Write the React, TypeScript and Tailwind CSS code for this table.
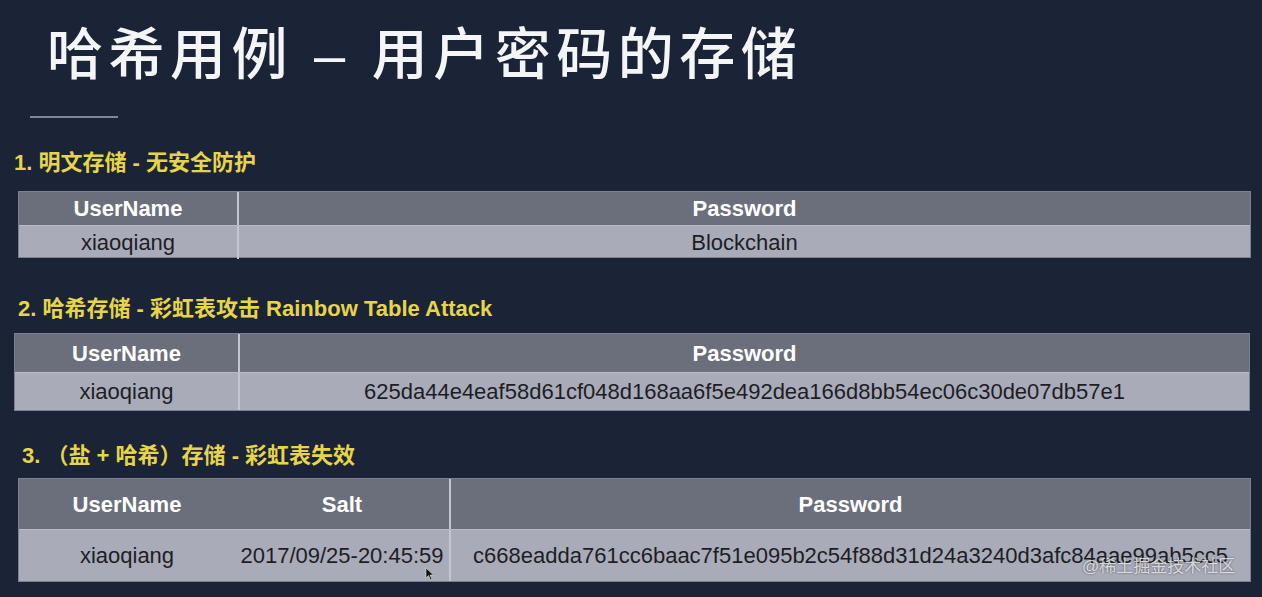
import React from 'react';

const font = '"Liberation Sans", "Noto Sans CJK SC", sans-serif';

const hash2 = '625da44e4eaf58d61cf048d168aa6f5e492dea166d8bb54ec06c30de07db57e1';
const hash3 = 'c668eadda761cc6baac7f51e095b2c54f88d31d24a3240d3afc84aae99ab5cc5';

function Label({ children, className }: { children: React.ReactNode; className: string }) {
  return (
    <div className={`text-[22px] font-bold leading-none text-[#e6d549] ${className}`}>
      {children}
    </div>
  );
}

export default function App() {
  return (
    <div
      className="relative w-[1262px] h-[597px] overflow-hidden bg-[#1b2337]"
      style={{ fontFamily: font }}
    >
      {/* Title */}
      <h1 className="ml-[47px] pt-[27px] text-[56px] leading-none font-medium tracking-[5.5px] text-[#f4f5f7]">
        哈希用例 – 用户密码的存储
      </h1>
      <div className="ml-[30px] mt-[33px] w-[88px] h-[2px] bg-[#7d869a]" />

      {/* 1 */}
      <Label className="ml-[14px] mt-[34px]">1. 明文存储 - 无安全防护</Label>
      <div className="ml-[18px] mt-[17px] w-[1233px] border border-[#7c8090]">
        <div className="grid grid-cols-[220px_1fr] h-[33px] bg-[#6b6f7b] text-white font-bold text-[22px]">
          <div className="flex items-center justify-center border-r-2 border-[#c3c6cf]">UserName</div>
          <div className="flex items-center justify-center">Password</div>
        </div>
        <div className="grid grid-cols-[220px_1fr] h-[32px] bg-[#a9abb9] text-[#1d1e25] text-[22px] border-t border-[#b9bcc6]">
          <div className="flex items-center justify-center border-r-2 border-[#c3c6cf]">xiaoqiang</div>
          <div className="flex items-center justify-center">Blockchain</div>
        </div>
      </div>

      {/* 2 */}
      <Label className="ml-[18px] mt-[40px]">2. 哈希存储 - 彩虹表攻击 Rainbow Table Attack</Label>
      <div className="ml-[14px] mt-[13px] w-[1236px] border border-[#7c8090]">
        <div className="grid grid-cols-[225px_1fr] h-[38px] bg-[#6b6f7b] text-white font-bold text-[22px]">
          <div className="flex items-center justify-center border-r-2 border-[#c3c6cf]">UserName</div>
          <div className="flex items-center justify-center">Password</div>
        </div>
        <div className="grid grid-cols-[225px_1fr] h-[38px] bg-[#a9abb9] text-[#1d1e25] text-[22px] border-t border-[#b9bcc6]">
          <div className="flex items-center justify-center border-r-2 border-[#c3c6cf]">xiaoqiang</div>
          <div className="flex items-center justify-center">{hash2}</div>
        </div>
      </div>

      {/* 3 */}
      <Label className="ml-[22px] mt-[34px]">3. （盐 + 哈希）存储 - 彩虹表失效</Label>
      <div className="ml-[18px] mt-[11px] w-[1233px] border border-[#7c8090]">
        <div className="grid grid-cols-[216px_216px_1fr] h-[50px] bg-[#6b6f7b] text-white font-bold text-[22px]">
          <div className="flex items-center justify-center">UserName</div>
          <div className="flex items-center justify-center border-r-2 border-[#c3c6cf]">Salt</div>
          <div className="flex items-center justify-center">Password</div>
        </div>
        <div className="grid grid-cols-[216px_216px_1fr] h-[52px] bg-[#a9abb9] text-[#1d1e25] text-[22px] border-t border-[#b9bcc6]">
          <div className="flex items-center justify-center">xiaoqiang</div>
          <div className="flex items-center justify-center border-r-2 border-[#c3c6cf] whitespace-nowrap">2017/09/25-20:45:59</div>
          <div className="flex items-center justify-center whitespace-nowrap">{hash3}</div>
        </div>
      </div>

      {/* mouse cursor */}
      <svg className="absolute left-[425px] top-[567px]" width="10" height="14" viewBox="0 0 10 14">
        <path d="M1 1 L1 11 L3.5 8.5 L5.5 13 L7 12.3 L5 8 L8.5 8 Z" fill="#111" stroke="#ddd" strokeWidth="0.6" />
      </svg>

      {/* watermark */}
      <div className="absolute left-[1082px] top-[558px] text-[17px] leading-none text-white/75 [text-shadow:0_0_2px_rgba(0,0,0,0.6)]">
        @稀土掘金技术社区
      </div>
    </div>
  );
}
